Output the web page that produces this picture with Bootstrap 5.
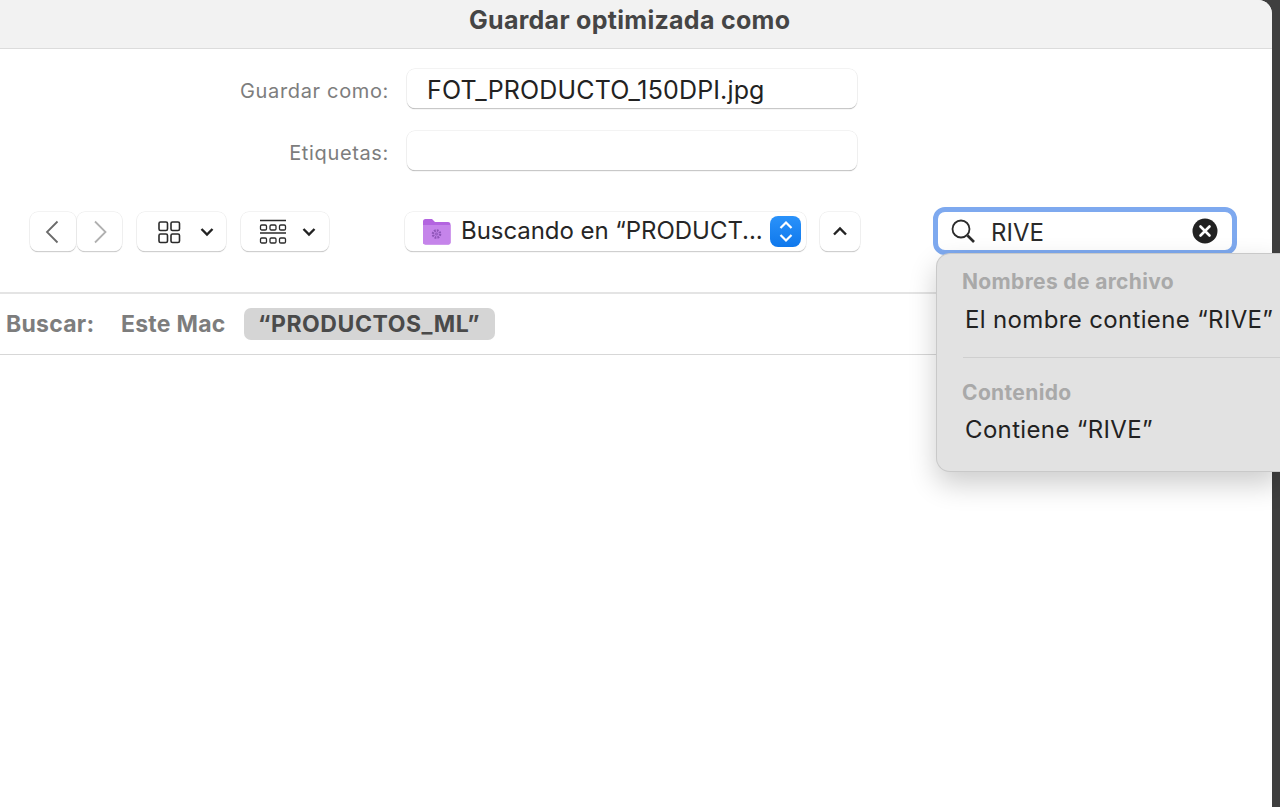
<!DOCTYPE html>
<html lang="es">
<head>
<meta charset="utf-8">
<title>Guardar optimizada como</title>
<link href="https://cdn.jsdelivr.net/npm/bootstrap@5.3.0/dist/css/bootstrap.min.css" rel="stylesheet">
<style>
html,body{height:807px;overflow:hidden}
body{background:#3f3f3f;font-family:Inter,"Liberation Sans",sans-serif;color:#222;-webkit-font-smoothing:antialiased}
.shell{height:807px;position:relative}
.sheet{width:1272px;height:807px;background:#fff;border-top-right-radius:14px;flex:none}
.titlebar{height:49px;background:#f2f2f2;border-top-right-radius:14px;border-bottom:1px solid #dcdcdc;padding-left:469px;padding-top:5px;font-size:25px;font-weight:700;color:#454545;line-height:30px;letter-spacing:.29px}
.formzone{padding-top:20px}
.frow{height:39px;margin-bottom:23px}
.flabel{width:389px;text-align:right;font-size:20px;color:#7d7d7d;margin-right:18px;letter-spacing:.65px;padding-top:4px}
.ffield{width:450px;height:39px;border-radius:8px;background:#fff;box-shadow:0 0 0 .5px #e8e8e8,0 1px 1px 0 #9f9f9f;padding-left:20px;font-size:25px;line-height:42px;color:#222;letter-spacing:.15px}
.toolzone{height:40px;margin-top:42px;padding-left:30px}
.tbtn{height:39px;border-radius:8px;background:#fff;box-shadow:0 0 0 .5px #e8e8e8,0 1px 1px 0 #b0b0b0;flex:none}
.w-nav{width:46px;padding-left:15px}
.w-nav2{width:45px;margin-left:1px}
.w-v1{width:89px;margin-left:15px;padding-left:20px;gap:19px}
.w-v2{width:88px;margin-left:15px;padding-left:18px;gap:15px}
.w-pop{width:401px;margin-left:76px;padding-left:17px;font-size:24px;letter-spacing:-.05px;white-space:nowrap;color:#262626}
.w-up{width:40px;margin-left:14px}
.poptext{margin-left:10px;width:308px;overflow:hidden;padding-bottom:2px}
.stepper{width:31px;height:31px;border-radius:8px;background:linear-gradient(#2a92fa,#0f78ec);margin-left:1px}
.searchbox{width:304px;height:48px;margin-left:73px;margin-top:-5px;border-radius:12px;border:5px solid #7ea9ef;background:#fff;padding-left:11px;font-size:24px;flex:none;color:#2a2a2a}
.searchtext{margin-left:14px;width:201px;padding-top:4px}
.scope{height:63px;margin-top:40px;border-top:2px solid #e4e4e4;border-bottom:1px solid #d7d7d7;padding-left:6px;font-size:23px;font-weight:700;color:#7d7d7d;letter-spacing:.25px}
.scopelabel{width:115px;padding-top:1px}
.scopemac{width:123px;padding-top:1px}
.scopepill{width:251px;height:32px;border-radius:7px;background:#d5d5d5;color:#4a4a4a;padding-left:14px;line-height:32px;white-space:nowrap;letter-spacing:.55px;margin-top:-1px}
.suggest{position:absolute;left:936px;top:253px;width:344px;height:219px;background:#e2e2e2;border-radius:14px 0 0 14px;border:1px solid #c9c9c9;border-right:0;box-shadow:0 12px 28px rgba(0,0,0,.2);font-size:24px;color:#222;padding-left:25px;padding-top:14px;overflow:hidden}
.suggesthead{font-size:21px;font-weight:700;color:#a9a9a9;line-height:28px;letter-spacing:.35px}
.suggestitem{line-height:34px;margin-left:3px;margin-top:7px;white-space:nowrap;letter-spacing:.35px}
.suggestitem:last-child{margin-top:6px}
.suggestline{height:1px;background:#cfcfcf;margin:20px 0 21px 1px}
.darkstrip{width:8px;height:807px;background:#3f3f3f;flex:none}
.ico{display:block;flex:none}
</style>
</head>
<body>
<div class="shell d-flex">
  <div class="sheet">
    <div class="titlebar">Guardar optimizada como</div>
    <div class="formzone">
      <div class="frow d-flex align-items-center">
        <div class="flabel">Guardar como:</div>
        <div class="ffield">FOT_PRODUCTO_150DPI.jpg</div>
      </div>
      <div class="frow d-flex align-items-center">
        <div class="flabel">Etiquetas:</div>
        <div class="ffield"></div>
      </div>
    </div>
    <div class="toolzone d-flex align-items-start">
      <div class="tbtn w-nav d-flex align-items-center">
        <svg class="ico" width="14" height="24" viewBox="0 0 14 24"><path d="M12.500 1.500 2 12l10.500 10.500" fill="none" stroke="#6a6a6a" stroke-width="1.800"/></svg>
      </div>
      <div class="tbtn w-nav2 d-flex align-items-center justify-content-center">
        <svg class="ico" width="16" height="24" viewBox="0 0 16 24"><path d="M3 1.500 13.500 12 3 22.500" fill="none" stroke="#b0b0b0" stroke-width="1.800"/></svg>
      </div>
      <div class="tbtn w-v1 d-flex align-items-center">
        <svg class="ico" width="24" height="24" viewBox="0 0 24 24" fill="none" stroke="#2b2b2b" stroke-width="1.6"><rect x="2" y="2" width="8.5" height="8.5" rx="1.5"/><rect x="14" y="2" width="8.5" height="8.5" rx="1.5"/><rect x="2" y="14" width="8.5" height="8.5" rx="1.5"/><rect x="14" y="14" width="8.5" height="8.5" rx="1.5"/></svg>
        <svg class="ico" width="14" height="10" viewBox="0 0 14 10"><path d="M1.500 2 7 7.500 12.500 2" fill="none" stroke="#222" stroke-width="2.400"/></svg>
      </div>
      <div class="tbtn w-v2 d-flex align-items-center">
        <svg class="ico" width="28" height="26" viewBox="0 0 28 26" fill="none" stroke="#2b2b2b" stroke-width="1.3"><path d="M1 1.500h26M1 14h26" stroke-width="1.600"/><rect x="1.500" y="6" width="6" height="5" rx="1.300"/><rect x="11" y="6" width="6" height="5" rx="1.300"/><rect x="20.500" y="6" width="6" height="5" rx="1.300"/><rect x="1.500" y="19" width="6" height="5" rx="1.300"/><rect x="11" y="19" width="6" height="5" rx="1.300"/><rect x="20.500" y="19" width="6" height="5" rx="1.300"/></svg>
        <svg class="ico" width="14" height="10" viewBox="0 0 14 10"><path d="M1.500 2 7 7.500 12.500 2" fill="none" stroke="#222" stroke-width="2.400"/></svg>
      </div>
      <div class="tbtn w-pop d-flex align-items-center">
        <svg class="ico" width="29" height="27" viewBox="0 0 29 27"><path d="M1 3.500Q1 1 3.500 1h6.500l3 3h13Q28.500 4 28.500 6.500v18q0 2-2 2h-23q-2.500 0-2.500-2z" fill="#b364e0"/><path d="M1 7h27.500v17.500q0 2-2 2h-23q-2.500 0-2.500-2z" fill="#c584ea"/><circle cx="14.500" cy="16" r="3.600" fill="none" stroke="#8e55b8" stroke-width="2.400" stroke-dasharray="1.800 1"/><circle cx="14.500" cy="16" r="1.800" fill="#9d62c7"/></svg>
        <div class="poptext">Buscando en “PRODUCT...</div>
        <div class="stepper d-flex align-items-center justify-content-center">
          <svg class="ico" width="16" height="25" viewBox="0 0 16 25" fill="none" stroke="#fff" stroke-width="2.200"><path d="M2.500 9 8 3.500 13.500 9M2.500 16 8 21.500 13.500 16"/></svg>
        </div>
      </div>
      <div class="tbtn w-up d-flex align-items-center justify-content-center">
        <svg class="ico" width="16" height="11" viewBox="0 0 16 11"><path d="M2 8.500 8 2.500l6 6" fill="none" stroke="#222" stroke-width="2.400"/></svg>
      </div>
      <div class="searchbox d-flex align-items-center">
        <svg class="ico" width="28" height="28" viewBox="0 0 28 28" fill="none" stroke="#2b2b2b"><circle cx="12" cy="12" r="8.500" stroke-width="1.800"/><path d="m18.500 18.500 6.500 6.500" stroke-width="2.600"/></svg>
        <div class="searchtext">RIVE</div>
        <svg class="ico" width="26" height="26" viewBox="0 0 26 26"><circle cx="13" cy="13" r="12.500" fill="#222"/><path d="m8.500 8.500 9 9m0-9-9 9" stroke="#fff" stroke-width="2.600" stroke-linecap="round"/></svg>
      </div>
    </div>
    <div class="scope d-flex align-items-center">
      <div class="scopelabel">Buscar:</div>
      <div class="scopemac">Este Mac</div>
      <div class="scopepill">“PRODUCTOS_ML”</div>
    </div>
  </div>
  <div class="darkstrip"></div>
  <div class="suggest">
    <div class="suggesthead">Nombres de archivo</div>
    <div class="suggestitem">El nombre contiene “RIVE”</div>
    <div class="suggestline"></div>
    <div class="suggesthead">Contenido</div>
    <div class="suggestitem">Contiene “RIVE”</div>
  </div>
</div>
<script src="https://cdn.jsdelivr.net/npm/bootstrap@5.3.0/dist/js/bootstrap.bundle.min.js"></script>
</body>
</html>
